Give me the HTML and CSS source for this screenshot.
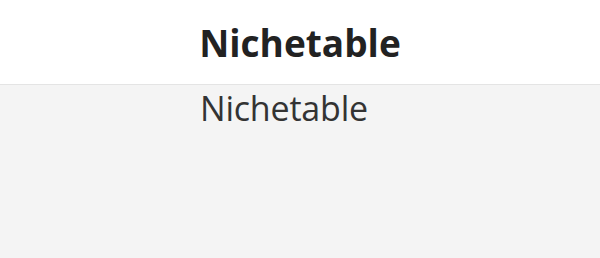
FILE: index.html
```html
<!DOCTYPE html>
<html>
<head>
<meta charset="utf-8">
<link rel="stylesheet" href="styles.css">
</head>
<body>
<header class="top">
  <h1 class="title">Nichetable</h1>
</header>
<main class="content">
  <p class="name">Nichetable</p>
</main>
</body>
</html>
```

FILE: styles.css
```css
html, body {
  margin: 0;
  padding: 0;
  height: 100%;
}
body {
  background: #f4f4f4;
  font-family: "Open Sans", "Noto Sans", sans-serif;
  color: #222;
}
.top {
  background: #ffffff;
  height: 84px;
  border-bottom: 1px solid #e4e4e4;
  display: flex;
  align-items: center;
  justify-content: center;
}
.title {
  margin: 0;
  font-size: 37px;
  font-weight: 700;
  color: #222;
  letter-spacing: 0;
}
.content {
  width: 202px;
  margin: 0 auto;
}
.name {
  margin: 0;
  padding-left: 1px;
  font-size: 34px;
  font-weight: 400;
  color: #333;
  letter-spacing: -0.2px;
}
```
